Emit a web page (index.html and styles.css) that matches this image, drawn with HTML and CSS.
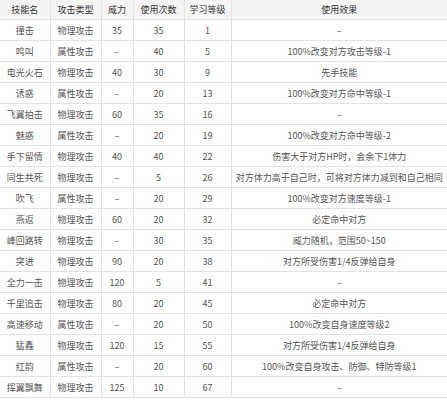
FILE: index.html
```html
<!DOCTYPE html>
<html lang="zh">
<head>
<meta charset="utf-8">
<link rel="stylesheet" href="styles.css">
</head>
<body>
<table class="skills">
<colgroup>
<col class="c-name"><col class="c-type"><col class="c-power"><col class="c-uses"><col class="c-level"><col class="c-effect">
</colgroup>
<thead>
<tr><th>技能名</th><th>攻击类型</th><th>威力</th><th>使用次数</th><th>学习等级</th><th>使用效果</th></tr>
</thead>
<tbody>
<tr><td>撞击</td><td>物理攻击</td><td>35</td><td>35</td><td>1</td><td>–</td></tr>
<tr><td>鸣叫</td><td>属性攻击</td><td>–</td><td>40</td><td>5</td><td>100%改变对方攻击等级-1</td></tr>
<tr><td>电光火石</td><td>物理攻击</td><td>40</td><td>30</td><td>9</td><td>先手技能</td></tr>
<tr><td>诱惑</td><td>属性攻击</td><td>–</td><td>20</td><td>13</td><td>100%改变对方命中等级-1</td></tr>
<tr><td>飞翼拍击</td><td>物理攻击</td><td>60</td><td>35</td><td>16</td><td>–</td></tr>
<tr><td>魅惑</td><td>属性攻击</td><td>–</td><td>20</td><td>19</td><td>100%改变对方命中等级-2</td></tr>
<tr><td>手下留情</td><td>物理攻击</td><td>40</td><td>40</td><td>22</td><td>伤害大于对方HP时，会余下1体力</td></tr>
<tr><td>同生共死</td><td>物理攻击</td><td>–</td><td>5</td><td>26</td><td>对方体力高于自己时，可将对方体力减到和自己相同</td></tr>
<tr><td>吹飞</td><td>属性攻击</td><td>–</td><td>20</td><td>29</td><td>100%改变对方速度等级-1</td></tr>
<tr><td>燕返</td><td>物理攻击</td><td>60</td><td>20</td><td>32</td><td>必定命中对方</td></tr>
<tr><td>峰回路转</td><td>物理攻击</td><td>–</td><td>30</td><td>35</td><td>威力随机，范围50~150</td></tr>
<tr><td>突进</td><td>物理攻击</td><td>90</td><td>20</td><td>38</td><td>对方所受伤害1/4反弹给自身</td></tr>
<tr><td>全力一击</td><td>物理攻击</td><td>120</td><td>5</td><td>41</td><td>–</td></tr>
<tr><td>千里追击</td><td>物理攻击</td><td>80</td><td>20</td><td>45</td><td>必定命中对方</td></tr>
<tr><td>高速移动</td><td>属性攻击</td><td>–</td><td>20</td><td>50</td><td>100%改变自身速度等级2</td></tr>
<tr><td>猛鑫</td><td>物理攻击</td><td>120</td><td>15</td><td>55</td><td>对方所受伤害1/4反弹给自身</td></tr>
<tr><td>红韵</td><td>属性攻击</td><td>–</td><td>20</td><td>60</td><td>100%改变自身攻击、防御、特防等级1</td></tr>
<tr><td>挥翼飘舞</td><td>物理攻击</td><td>125</td><td>10</td><td>67</td><td>–</td></tr>
</tbody>
</table>
</body>
</html>
```
FILE: styles.css
```css
html, body {
  margin: 0;
  padding: 0;
  background: #ffffff;
}

.skills {
  width: 447px;
  border-collapse: collapse;
  table-layout: fixed;
  font-family: "Noto Sans CJK SC", "Noto Sans", sans-serif;
  font-size: 9px;
  color: #555555;
}

.c-name { width: 50px; }
.c-type { width: 51px; }
.c-power { width: 32px; }
.c-uses { width: 51px; }
.c-level { width: 47px; }
.c-effect { width: 216px; }

.skills th,
.skills td {
  border: 1px solid #e2e2e2;
  text-align: center;
  padding: 0;
  white-space: nowrap;
  overflow: hidden;
}

.skills th {
  height: 19px;
  background: #f4f4f4;
  color: #333333;
  font-weight: normal;
  border-top: none;
}

.skills td {
  height: 20px;
}

.skills tr > :first-child {
  border-left: none;
}

.skills tr > :last-child {
  border-right: none;
}
```
